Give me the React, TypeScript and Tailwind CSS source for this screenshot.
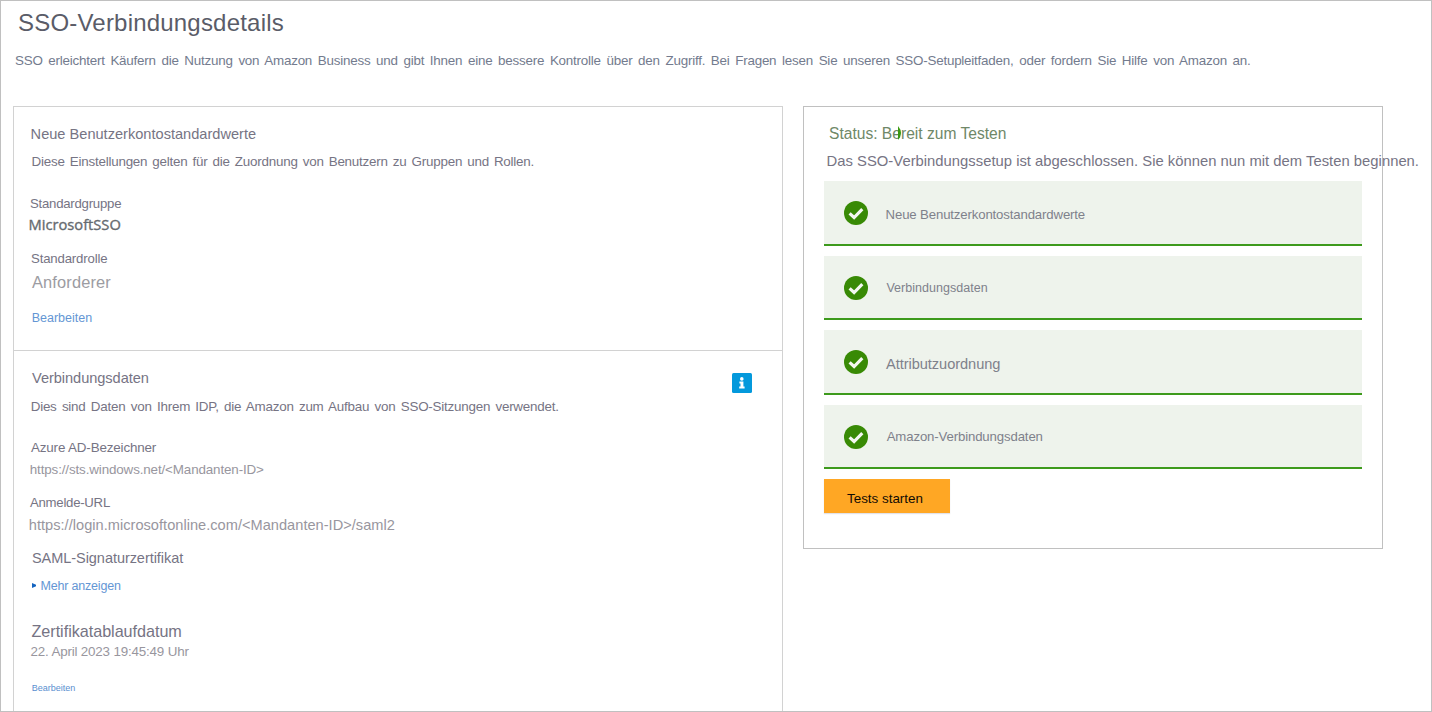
import React from "react";

function CheckCircle() {
  return (
    <svg className="mt-5 h-6 w-6 shrink-0" viewBox="0 0 24 24" fill="none">
      <circle cx="12" cy="12" r="12" fill="#388a05" />
      <path d="M5.6 12.3 L10.1 16.5 L18.3 8.1" stroke="#f4f8f1" strokeWidth="3.1" strokeLinecap="butt" strokeLinejoin="miter" />
    </svg>
  );
}

function InfoBadge() {
  return (
    <svg className="h-5 w-5 shrink-0" viewBox="0 0 20 20">
      <rect width="20" height="20" rx="1.5" fill="#0499dc" />
      <circle cx="9.8" cy="5.9" r="1.8" fill="#fff" />
      <path d="M7.4 8.4h4v5h1.2v2H7.2v-2h1.3v-3H7.4z" fill="#fff" />
    </svg>
  );
}

const steps = [
  { label: "Neue Benutzerkontostandardwerte", box: "h-[65px]", text: "mt-6 ml-[17.6px] text-[13.2px] leading-[19px] tracking-[-0.14px]" },
  { label: "Verbindungsdaten", box: "h-16", text: "mt-[22px] ml-[18.4px] text-[12.5px] leading-5 tracking-[0.04px]" },
  { label: "Attributzuordnung", box: "h-[65px]", text: "mt-6 ml-[18px] text-[14.6px] leading-5 tracking-[-0.05px]" },
  { label: "Amazon-Verbindungsdaten", box: "h-16", text: "mt-[22px] ml-[18.7px] text-[13.2px] leading-[19px] tracking-[-0.13px]" },
];

export default function App() {
  return (
    <div className="h-[712px] w-[1432px] overflow-hidden border border-[#c0c0c0] bg-white font-['Liberation_Sans',sans-serif] whitespace-nowrap text-[#767484]">
      <header className="pt-2">
        <h1 className="pl-[17px] text-[24px] leading-[27px] tracking-[0.2px] text-[#5a5c68]">SSO-Verbindungsdetails</h1>
        <p className="mt-[15px] pl-[14px] text-[13.4px] leading-[19px] tracking-[-0.22px] [word-spacing:2.2px] text-[#737b8e]">
          SSO erleichtert Käufern die Nutzung von Amazon Business und gibt Ihnen eine bessere Kontrolle über den Zugriff. Bei Fragen lesen Sie unseren SSO-Setupleitfaden, oder fordern Sie Hilfe von Amazon an.
        </p>
      </header>

      <main className="mt-9 flex items-start gap-5 pl-3">
        <div className="h-[620px] w-[770px] border border-[#d2d2d2]">
          <section className="border-b border-[#d2d2d2] pt-[17px] pb-[22px] pl-[14px]">
            <h2 className="pl-[2.6px] text-[14.6px] leading-5">Neue Benutzerkontostandardwerte</h2>
            <p className="mt-2 pl-[3.6px] text-[13.4px] leading-[19px] tracking-[-0.22px] [word-spacing:1.55px]">Diese Einstellungen gelten für die Zuordnung von Benutzern zu Gruppen und Rollen.</p>
            <h3 className="mt-[23px] pl-[2px] text-[13.2px] leading-[19px] tracking-[-0.24px]">Standardgruppe</h3>
            <p className="mt-[2px] pl-[0.5px] font-['Open_Sans',sans-serif] text-[14.7px] leading-[19px] text-[#666b70] [-webkit-text-stroke:0.35px_#666b70]">MicrosoftSSO</p>
            <h3 className="mt-[15px] pl-[3px] text-[13.2px] leading-[19px] tracking-[-0.16px]">Standardrolle</h3>
            <p className="mt-1 pl-[4px] text-[16.4px] leading-[21px] tracking-[0.15px] text-[#9c9ca2]">Anforderer</p>
            <a className="mt-[15px] block pl-[3.7px] text-[12.5px] leading-5 text-[#6496d4]">Bearbeiten</a>
          </section>

          <section className="pt-[17px] pl-[14px]">
            <div className="flex justify-between pr-[30px]">
              <div>
                <h2 className="pl-[4px] text-[14.6px] leading-5 tracking-[-0.05px]">Verbindungsdaten</h2>
                <p className="mt-[9px] pl-[2.7px] text-[13.4px] leading-[19px] tracking-[-0.22px] [word-spacing:1.78px]">Dies sind Daten von Ihrem IDP, die Amazon zum Aufbau von SSO-Sitzungen verwendet.</p>
              </div>
              <div className="pt-[5px]">
                <InfoBadge />
              </div>
            </div>
            <h3 className="mt-[22px] pl-[3px] text-[13.4px] leading-[19px] tracking-[-0.15px]">Azure AD-Bezeichner</h3>
            <p className="mt-[3px] pl-[1.8px] text-[13.4px] leading-[19px] tracking-[-0.13px] text-[#98969e]">{"https://sts.windows.net/<Mandanten-ID>"}</p>
            <h3 className="mt-[14px] pl-[2px] text-[13.2px] leading-[19px] tracking-[-0.26px]">Anmelde-URL</h3>
            <p className="mt-[3px] pl-[0.8px] text-[14.6px] leading-5 tracking-[0.02px] text-[#98969e]">{"https://login.microsoftonline.com/<Mandanten-ID>/saml2"}</p>
            <h3 className="mt-[13px] pl-[4px] text-[14.5px] leading-5 tracking-[-0.05px]">SAML-Signaturzertifikat</h3>
            <a className="mt-2 flex items-center pl-[4px] text-[12.5px] leading-5 tracking-[-0.2px] text-[#6496d4]">
              <svg className="mr-[4.6px] h-[5px] w-[4px] -translate-y-px" viewBox="0 0 4 5">
                <path d="M0 0L4 1.8V3.2L0 5z" fill="#1464c0" />
              </svg>
              Mehr anzeigen
            </a>
            <h3 className="mt-[25px] pl-[3.5px] text-[16.2px] leading-5 tracking-[-0.04px]">Zertifikatablaufdatum</h3>
            <p className="mt-px pl-[2.5px] text-[13.4px] leading-[19px] tracking-[-0.18px] text-[#98969e]">22. April 2023 19:45:49 Uhr</p>
            <a className="mt-[22px] block pl-[3.8px] text-[9px] leading-[10px] text-[#5a8fd0]">Bearbeiten</a>
          </section>
        </div>

        <aside className="h-[443px] w-[580px] border border-[#c0c0c0] px-5 pt-4">
          <h2 className="relative pl-[5px] text-[15.6px] leading-[21px] text-[#6f8868]">
            Status: Bereit zum Testen
            <svg className="absolute top-[3px] left-[74px] h-[14px] w-[3px]" viewBox="0 0 3 14">
              <path d="M0 0Q6 7 0 14z" fill="#3a9a10" />
            </svg>
          </h2>
          <p className="mt-[7px] pl-[2.6px] text-[14.8px] leading-5 tracking-[0.015px]">Das SSO-Verbindungssetup ist abgeschlossen. Sie können nun mit dem Testen beginnen.</p>
          <ul className="mt-[10px] flex flex-col gap-[10px]">
            {steps.map((s) => (
              <li key={s.label} className={`flex items-start border-b-2 border-[#3d9a1c] bg-[#eef3ec] pl-5 text-[#7e818b] ${s.box}`}>
                <CheckCircle />
                <span className={s.text}>{s.label}</span>
              </li>
            ))}
          </ul>
          <button className="mt-[10px] flex h-[34px] w-[126px] items-start bg-[#ffa724] pt-[10px] pl-[23px] text-[13.4px] leading-[19px] text-[#120c04] shadow-[0_1px_1px_rgba(60,60,100,0.15)]">
            Tests starten
          </button>
        </aside>
      </main>
    </div>
  );
}
